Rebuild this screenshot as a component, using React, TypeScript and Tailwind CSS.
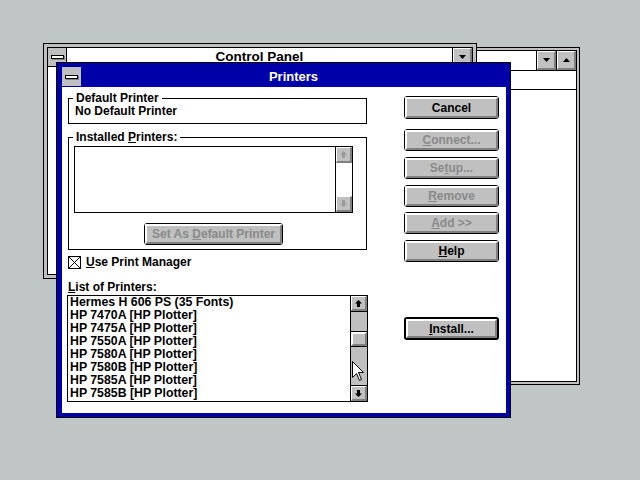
import React from 'react';

const sysFont = "[font-family:'Liberation_Sans',Arial,sans-serif] font-bold text-[12px]";
const bevel = 'border-t-2 border-l-2 border-b-2 border-r-2 border-t-white border-l-white border-b-[#808080] border-r-[#808080]';

const printers = [
  'Hermes H 606 PS (35 Fonts)',
  'HP 7470A [HP Plotter]',
  'HP 7475A [HP Plotter]',
  'HP 7550A [HP Plotter]',
  'HP 7580A [HP Plotter]',
  'HP 7580B [HP Plotter]',
  'HP 7585A [HP Plotter]',
  'HP 7585B [HP Plotter]',
];

function SysBox({ dialog }: { dialog?: boolean }) {
  return (
    <div className={`w-[19px] h-full bg-[#c0c0c0] flex items-center justify-center ${dialog ? '' : 'border-r border-black'}`}>
      <div className="w-[13px] h-[4px] bg-white border border-black shadow-[1px_1px_0_#808080]" />
    </div>
  );
}

function CaptionBtn({ dir }: { dir: 'up' | 'down' }) {
  return (
    <div className="w-[20px] h-full border-l border-black bg-[#c0c0c0]">
      <div className="h-full border-t border-l border-b-2 border-r-2 border-t-white border-l-white border-b-[#808080] border-r-[#808080] flex items-center justify-center">
        <svg width="7" height="4" viewBox="0 0 7 4">
          <path d={dir === 'down' ? 'M0 0H7L3.5 4Z' : 'M0 4H7L3.5 0Z'} fill="black" />
        </svg>
      </div>
    </div>
  );
}

function ScrollArrow({ dir, disabled }: { dir: 'up' | 'down'; disabled?: boolean }) {
  const d =
    dir === 'up'
      ? 'M3.5 0L7 3.5H5V7H2V3.5H0Z'
      : 'M3.5 7L7 3.5H5V0H2V3.5H0Z';
  return (
    <div className="h-full bg-[#c0c0c0] border-t border-l border-b-2 border-r-2 border-t-white border-l-white border-b-[#808080] border-r-[#808080] flex items-center justify-center">
      <svg width="7" height="7" viewBox="0 0 7 7">
        <path d={d} fill={disabled ? '#9a9a9a' : 'black'} />
      </svg>
    </div>
  );
}

function WinButton({
  children,
  disabled,
  def,
  className = '',
}: {
  children: React.ReactNode;
  disabled?: boolean;
  def?: boolean;
  className?: string;
}) {
  return (
    <div className={`${def ? 'border-2' : 'border'} border-black rounded-[3px] bg-[#c0c0c0] ${className}`}>
      <div className={`h-full ${bevel} flex items-center justify-center leading-[12px]`}>
        <span className={disabled ? 'text-[#8a8a8a]' : 'text-black'}>{children}</span>
      </div>
    </div>
  );
}

export default function App() {
  return (
    <div className={`relative w-[640px] h-[480px] overflow-hidden bg-[#c0c6c6] ${sysFont}`}>
      {/* window behind Control Panel */}
      <div className="absolute left-[290px] top-[47px] w-[290px] h-[338px] border border-black bg-[#c0c0c0] p-[2px] flex">
        <div className="flex-1 border border-black bg-white flex flex-col">
          <div className="h-[20px] flex border-b border-black">
            <div className="flex-1 bg-white" />
            <CaptionBtn dir="down" />
            <CaptionBtn dir="up" />
          </div>
          <div className="h-[19px] border-b border-black" />
          <div className="flex-1" />
        </div>
      </div>

      {/* Control Panel */}
      <div className="absolute left-[43px] top-[43px] w-[434px] h-[236px] border border-black bg-[#c0c0c0] p-[3px] flex">
        <div className="flex-1 border border-black bg-white flex flex-col">
          <div className="h-[19px] flex border-b border-black">
            <SysBox />
            <div className="flex-1 flex items-center justify-center text-black text-[13.5px]">Control Panel</div>
            <CaptionBtn dir="down" />
          </div>
          <div className="flex-1" />
        </div>
      </div>

      {/* Printers dialog */}
      <div className="absolute left-[56px] top-[62px] w-[455px] h-[356px] border border-black bg-[#0000a8] pl-[5px] pr-[4px] pt-[4px] pb-[4px] flex flex-col">
        <div className="h-[20px] flex">
          <div className="h-[19px]">
            <SysBox dialog />
          </div>
          <div className="flex-1 flex items-center justify-center text-white text-[13px]">Printers</div>
        </div>

        <div className="flex-1 bg-white flex pl-[6px] pt-[5px] text-black">
          {/* left column */}
          <div className="w-[299px] flex flex-col">
            <fieldset className="border border-black p-0 m-0">
              <legend className="ml-[4px] px-[3px] leading-[12px]">Default Printer</legend>
              <div className="pl-[6px] pt-[1px] pb-[5px] leading-[13px]">No Default Printer</div>
            </fieldset>

            <fieldset className="mt-[7px] border border-black p-0 m-0">
              <legend className="ml-[4px] px-[3px] leading-[12px]">
                Installed <u>P</u>rinters:
              </legend>
              <div className="ml-[5px] mt-[3px] w-[279px] h-[67px] border border-black flex">
                <div className="flex-1" />
                <div className="w-[17px] border-l border-black flex flex-col">
                  <div className="h-[16px]">
                    <ScrollArrow dir="up" disabled />
                  </div>
                  <div className="flex-1 bg-white" />
                  <div className="h-[16px]">
                    <ScrollArrow dir="down" disabled />
                  </div>
                </div>
              </div>
              <div className="pb-[4px] pt-[10px]">
                <WinButton disabled className="ml-[75px] w-[139px] h-[22px]">
                  Set As <u>D</u>efault Printer
                </WinButton>
              </div>
            </fieldset>

            <div className="mt-[5px] h-[14px] flex items-center">
              <svg width="13" height="13" viewBox="0 0 13 13">
                <rect x="0.5" y="0.5" width="12" height="12" fill="white" stroke="black" />
                <path d="M1 1L12 12M12 1L1 12" stroke="black" strokeWidth="1" />
              </svg>
              <span className="ml-[5px] leading-[14px]">
                <u>U</u>se Print Manager
              </span>
            </div>

            <div className="mt-[12px] leading-[12px]">
              <u>L</u>ist of Printers:
            </div>

            <div className="mt-[2px] -ml-[1px] w-[301px] h-[107px] border border-black flex">
              <div className="flex-1 pl-[2px] leading-[13px] text-[12.3px] whitespace-nowrap overflow-hidden">
                {printers.map((p) => (
                  <div key={p} className="h-[13px]">
                    {p}
                  </div>
                ))}
              </div>
              <div className="w-[17px] border-l border-black flex flex-col bg-[#c0c0c0]">
                <div className="h-[16px] border-b border-black">
                  <ScrollArrow dir="up" />
                </div>
                <div className="flex-1 flex flex-col">
                  <div className="mt-[19px] h-[16px] border-y border-black">
                    <div className={`h-full ${bevel} bg-[#c0c0c0]`} />
                  </div>
                </div>
                <div className="h-[16px] border-t border-black">
                  <ScrollArrow dir="down" />
                </div>
              </div>
            </div>
          </div>

          {/* right column */}
          <div className="ml-[37px] w-[95px] flex flex-col pt-[4px]">
            <WinButton className="h-[23px]">Cancel</WinButton>
            <WinButton disabled className="mt-[10px] h-[22px]">
              <u>C</u>onnect...
            </WinButton>
            <WinButton disabled className="mt-[6px] h-[22px]">
              Se<u>t</u>up...
            </WinButton>
            <WinButton disabled className="mt-[6px] h-[22px]">
              <u>R</u>emove
            </WinButton>
            <WinButton disabled className="mt-[5px] h-[22px]">
              <u>A</u>dd &gt;&gt;
            </WinButton>
            <WinButton className="mt-[6px] h-[22px]">
              <u>H</u>elp
            </WinButton>
            <WinButton def className="mt-[55px] h-[23px]">
              <u>I</u>nstall...
            </WinButton>
          </div>
        </div>
      </div>

      {/* mouse pointer */}
      <svg className="absolute left-[352px] top-[361px]" width="13" height="21" viewBox="0 0 13 21">
        <path d="M0.5 0.5V16.5L4.5 12.5L7.5 19.5L9.5 18.5L6.5 11.5H11.5Z" fill="white" stroke="black" strokeWidth="1" />
      </svg>
    </div>
  );
}
